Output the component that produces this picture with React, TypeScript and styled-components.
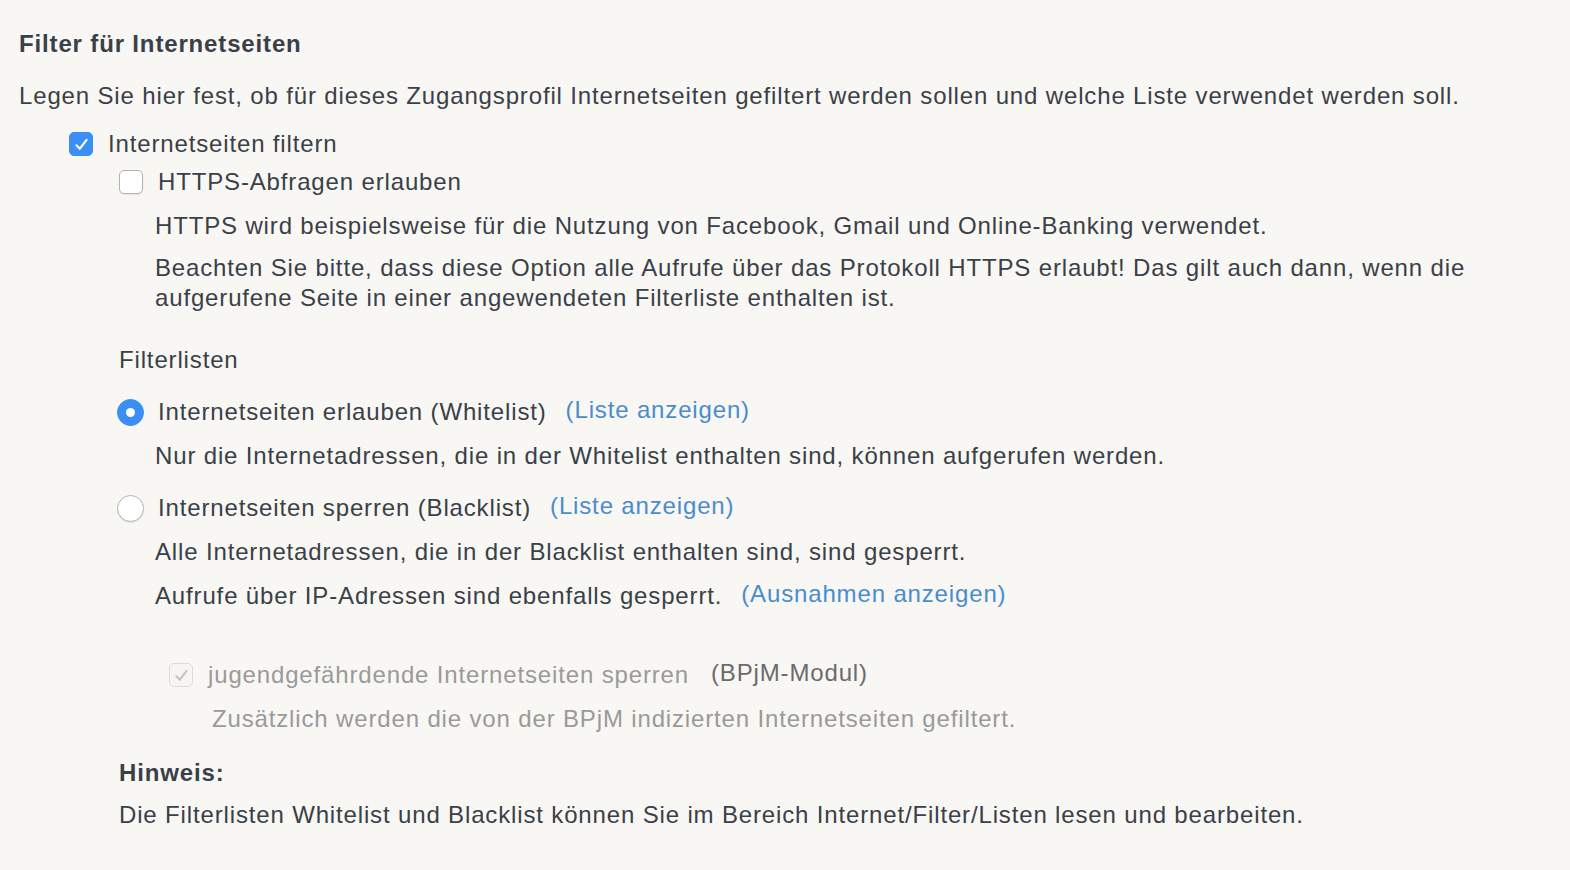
import React from "react";
import styled, { createGlobalStyle } from "styled-components";

const Global = createGlobalStyle`
  html, body { margin: 0; padding: 0; background: #f8f7f3; }
  body { font-family: "Liberation Sans", Arial, Helvetica, sans-serif; color: #3a4048; }
`;

const Page = styled.div`
  padding: 29px 0 40px 19px;
  font-size: 24px;
  line-height: 30px;
  letter-spacing: 0.85px;
`;

const Title = styled.h1`
  margin: 0;
  font-size: 24px;
  line-height: 30px;
  font-weight: bold;
`;

const Text = styled.div<{ $indent?: number; $top?: number; $muted?: boolean }>`
  margin-top: ${(p) => p.$top ?? 0}px;
  padding-left: ${(p) => p.$indent ?? 0}px;
  color: ${(p) => (p.$muted ? "#9a9a9a" : "inherit")};
  max-width: 1480px;
`;

const Row = styled.div<{ $indent: number; $top: number; $gap: number }>`
  display: flex;
  align-items: center;
  height: 30px;
  margin-top: ${(p) => p.$top}px;
  padding-left: ${(p) => p.$indent}px;
  & > :first-child {
    margin-right: ${(p) => p.$gap}px;
  }
`;

const Label = styled.span<{ $muted?: boolean }>`
  color: ${(p) => (p.$muted ? "#9a9a9a" : "inherit")};
  white-space: nowrap;
`;

const Link = styled.a`
  color: #4a8ccc;
  text-decoration: none;
  margin-left: 19px;
  position: relative;
  top: -2px;
  white-space: nowrap;
`;

const Module = styled.span`
  color: #6b6b6b;
  margin-left: 22px;
  position: relative;
  top: -2px;
`;

const Box = styled.span<{ $checked?: boolean; $disabled?: boolean }>`
  box-sizing: border-box;
  width: 24px;
  height: 24px;
  flex: none;
  border-radius: 5px;
  display: flex;
  align-items: center;
  justify-content: center;
  background: ${(p) => (p.$checked && !p.$disabled ? "#3a8ef6" : p.$disabled ? "#f6f5f1" : "#ffffff")};
  border: 1px solid ${(p) => (p.$checked && !p.$disabled ? "#3a8ef6" : p.$disabled ? "#dcdcd8" : "#b3b3b3")};
  box-shadow: ${(p) => (p.$disabled || p.$checked ? "none" : "0 1px 1px rgba(0,0,0,0.08)")};
`;

const Radio = styled.span<{ $checked?: boolean }>`
  box-sizing: border-box;
  width: 27px;
  height: 27px;
  flex: none;
  border-radius: 50%;
  display: flex;
  align-items: center;
  justify-content: center;
  background: ${(p) => (p.$checked ? "#3a8ef6" : "#ffffff")};
  border: 1px solid ${(p) => (p.$checked ? "#3a8ef6" : "#b3b3b3")};
  box-shadow: ${(p) => (p.$checked ? "none" : "0 1px 1px rgba(0,0,0,0.08)")};
`;

const Dot = styled.span`
  width: 9px;
  height: 9px;
  border-radius: 50%;
  background: #fff;
`;

const Strong = styled.div<{ $indent: number; $top: number }>`
  margin-top: ${(p) => p.$top}px;
  padding-left: ${(p) => p.$indent}px;
  font-weight: bold;
`;

const Check = ({ color }: { color: string }) => (
  <svg width="17" height="17" viewBox="0 0 16 16">
    <path d="M3.2 8.8 L6.4 12 L12.8 3.6" fill="none" stroke={color} strokeWidth="2" strokeLinecap="round" strokeLinejoin="round" />
  </svg>
);

export default function App() {
  return (
    <>
      <Global />
      <Page>
        <Title>Filter für Internetseiten</Title>
        <Text $top={22}>
          Legen Sie hier fest, ob für dieses Zugangsprofil Internetseiten gefiltert werden sollen und welche Liste verwendet werden soll.
        </Text>
        <Row $indent={50} $top={18} $gap={15}>
          <Box $checked>
            <Check color="#ffffff" />
          </Box>
          <Label>Internetseiten filtern</Label>
        </Row>
        <Row $indent={100} $top={8} $gap={15}>
          <Box />
          <Label>HTTPS-Abfragen erlauben</Label>
        </Row>
        <Text $indent={136} $top={14}>
          HTTPS wird beispielsweise für die Nutzung von Facebook, Gmail und Online-Banking verwendet.
        </Text>
        <Text $indent={136} $top={12}>
          Beachten Sie bitte, dass diese Option alle Aufrufe über das Protokoll HTTPS erlaubt! Das gilt auch dann, wenn die aufgerufene Seite in einer angewendeten Filterliste enthalten ist.
        </Text>
        <Text $indent={100} $top={32}>
          Filterlisten
        </Text>
        <Row $indent={98} $top={22} $gap={14}>
          <Radio $checked>
            <Dot />
          </Radio>
          <Label>Internetseiten erlauben (Whitelist)</Label>
          <Link href="#">(Liste anzeigen)</Link>
        </Row>
        <Text $indent={136} $top={14}>
          Nur die Internetadressen, die in der Whitelist enthalten sind, können aufgerufen werden.
        </Text>
        <Row $indent={98} $top={22} $gap={14}>
          <Radio />
          <Label>Internetseiten sperren (Blacklist)</Label>
          <Link href="#">(Liste anzeigen)</Link>
        </Row>
        <Text $indent={136} $top={14}>
          Alle Internetadressen, die in der Blacklist enthalten sind, sind gesperrt.
        </Text>
        <Row $indent={136} $top={14} $gap={0}>
          <Label>Aufrufe über IP-Adressen sind ebenfalls gesperrt.</Label>
          <Link href="#">(Ausnahmen anzeigen)</Link>
        </Row>
        <Row $indent={150} $top={49} $gap={15}>
          <Box $checked $disabled>
            <Check color="#c4c4c0" />
          </Box>
          <Label $muted>jugendgefährdende Internetseiten sperren</Label>
          <Module>(BPjM-Modul)</Module>
        </Row>
        <Text $indent={193} $top={14} $muted>
          Zusätzlich werden die von der BPjM indizierten Internetseiten gefiltert.
        </Text>
        <Strong $indent={100} $top={24}>
          Hinweis:
        </Strong>
        <Text $indent={100} $top={12}>
          Die Filterlisten Whitelist und Blacklist können Sie im Bereich Internet/Filter/Listen lesen und bearbeiten.
        </Text>
      </Page>
    </>
  );
}
